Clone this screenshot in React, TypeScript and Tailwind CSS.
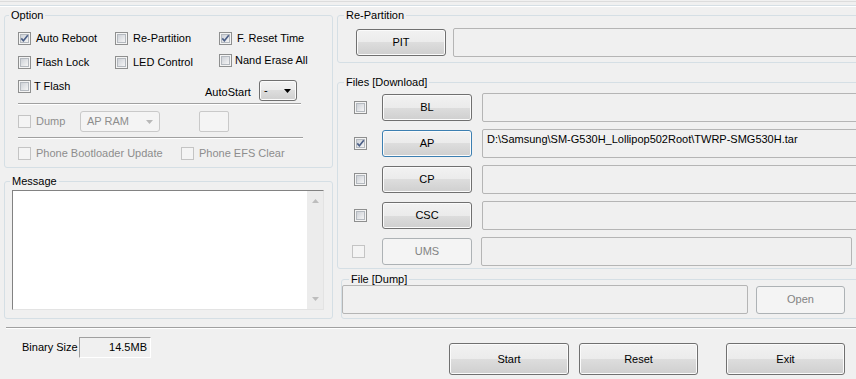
const btnBg =
  "bg-[linear-gradient(to_bottom,#f2f2f2_0%,#ebebeb_50%,#dddddd_50%,#cfcfcf_100%)] shadow-[inset_0_0_0_1px_#fbfbfb]";

function Check({ checked = false, disabled = false }: { checked?: boolean; disabled?: boolean }) {
  return (
    <svg width="13" height="13" viewBox="0 0 13 13" className="shrink-0">
      <defs>
        <linearGradient id="cbfill" x1="0" y1="0" x2="1" y2="1">
          <stop offset="0" stopColor="#cbcfd5" />
          <stop offset="1" stopColor="#f7f7f7" />
        </linearGradient>
      </defs>
      <rect x="0.5" y="0.5" width="12" height="12" fill={disabled ? "#f4f4f4" : "#f4f4f4"} stroke={disabled ? "#c4c4c4" : "#8e8f8f"} />
      {!disabled && <rect x="2.5" y="2.5" width="8" height="8" fill="url(#cbfill)" stroke="#b4b9bf" />}
      {checked && (
        <path d="M3.3 6.4 L5.4 8.8 L9.8 3.2" fill="none" stroke="#4a5e86" strokeWidth="1.6" />
      )}
    </svg>
  );
}

function Option({
  label,
  checked,
  disabled,
  gap = "ml-[5px]",
  className = "",
}: {
  label: string;
  checked?: boolean;
  disabled?: boolean;
  gap?: string;
  className?: string;
}) {
  return (
    <div className={`flex h-[13px] items-center ${className}`}>
      <Check checked={checked} disabled={disabled} />
      <span className={`${gap} whitespace-nowrap leading-[13px] ${disabled ? "text-[#8d8d8d]" : ""}`}>{label}</span>
    </div>
  );
}

function Button({
  label,
  className = "",
  disabled,
  focused,
}: {
  label: string;
  className?: string;
  disabled?: boolean;
  focused?: boolean;
}) {
  if (disabled)
    return (
      <div
        className={`flex shrink-0 items-center justify-center rounded-[3px] border border-[#adb2b5] bg-[#f4f4f4] text-[#838383] ${className}`}
      >
        {label}
      </div>
    );
  return (
    <div
      className={`flex shrink-0 items-center justify-center rounded-[3px] border ${
        focused ? "border-[#3c7fb1]" : "border-[#707070]"
      } ${btnBg} ${className}`}
    >
      {label}
    </div>
  );
}

function Field({ text, className = "" }: { text?: string; className?: string }) {
  return (
    <div
      className={`h-[29px] rounded-[2px] border border-[#b5b5b5] bg-[#f0f0f0] pl-[4px] pt-[3px] leading-[13px] ${className}`}
    >
      {text}
    </div>
  );
}

function Arrow({ color }: { color: string }) {
  return (
    <svg width="7" height="4" viewBox="0 0 7 4">
      <path d="M0 0 H7 L3.5 4 Z" fill={color} />
    </svg>
  );
}

function Separator({ className = "" }: { className?: string }) {
  return <div className={`h-[2px] border-t border-b border-t-[#a0a0a0] border-b-white ${className}`} />;
}

export default function App() {
  return (
    <div className="flex h-[379px] w-[856px] flex-col overflow-hidden bg-[#f0f0f0] font-['Liberation_Sans',Arial,sans-serif] text-[11px] text-black">
      <div className="h-[9px] shrink-0 pt-[1px]">
        <div className="h-[1px] bg-[#dcdcdc]" />
        <div className="mt-[3px] h-[1px] bg-[#d5dfe5]" />
        <div className="h-[1px] bg-white" />
      </div>

      <div className="flex h-[310px] shrink-0">
        {/* left column */}
        <div className="ml-[4px] flex w-[329px] shrink-0 flex-col">
          <fieldset className="h-[159px] rounded-[3px] border border-[#d5dfe5]">
            <legend className="ml-[4px] px-[2px] leading-[13px]">Option</legend>
            <div className="pl-[13px] pt-[10px]">
              <div className="flex h-[13px] items-center">
                <Option label="Auto Reboot" checked className="w-[97px]" />
                <Option label="Re-Partition" className="w-[104px]" />
                <Option label="F. Reset Time" checked />
              </div>
              <div className="mt-[11px] flex h-[13px] items-center">
                <Option label="Flash Lock" className="w-[97px]" />
                <Option label="LED Control" className="w-[104px]" />
                <Option label="Nand Erase All" gap="ml-[3px]" className="mb-[4px]" />
              </div>
              <div className="mt-[11px] flex h-[21px] items-start">
                <Option label="T Flash" gap="ml-[3px]" className="w-[187px]" />
                <span className="mt-[6px] w-[54px] leading-[13px]">AutoStart</span>
                <div
                  className={`flex h-[21px] w-[38px] items-center justify-between rounded-[3px] border border-[#707070] pl-[4px] pr-[5px] ${btnBg}`}
                >
                  <span>-</span>
                  <Arrow color="#000" />
                </div>
              </div>
              <Separator className="mt-[2px] w-[283px]" />
              <div className="mt-[6px] flex h-[21px] items-center">
                <Option label="Dump" disabled className="w-[62px]" />
                <div className="flex h-[21px] w-[80px] items-center justify-between rounded-[3px] border border-[#c9c9c9] bg-[#f4f4f4] pl-[6px] pr-[6px] text-[#8d8d8d]">
                  <span>AP RAM</span>
                  <Arrow color="#b8b8b8" />
                </div>
                <div className="ml-[39px] h-[21px] w-[30px] rounded-[2px] border border-[#c9c9c9] bg-[#f4f4f4]" />
              </div>
              <Separator className="mt-[5px] w-[285px]" />
              <div className="mt-[8px] flex h-[13px] items-center">
                <Option label="Phone Bootloader Update" disabled className="w-[163px]" />
                <Option label="Phone EFS Clear" disabled />
              </div>
            </div>
          </fieldset>

          <fieldset className="mt-[7px] h-[144px] rounded-[3px] border border-[#d5dfe5]">
            <legend className="ml-[5px] px-[2px] leading-[13px]">Message</legend>
            <div className="ml-[7px] mt-[2px] flex h-[120px] w-[312px] border border-t-[#828282] border-l-[#828282] border-r-[#e3e3e3] border-b-[#e3e3e3] bg-white">
              <div className="flex-1" />
              <div className="flex w-[16px] flex-col items-center justify-between bg-[#ececec] py-[8px]">
                <svg width="7" height="4" viewBox="0 0 7 4">
                  <path d="M0 4 H7 L3.5 0 Z" fill="#bdbdbd" />
                </svg>
                <Arrow color="#bdbdbd" />
              </div>
            </div>
          </fieldset>
        </div>

        {/* right column */}
        <div className="ml-[4px] flex w-[530px] shrink-0 flex-col">
          <fieldset className="h-[54px] rounded-[3px] border border-[#d5dfe5]">
            <legend className="ml-[6px] px-[2px] leading-[13px]">Re-Partition</legend>
            <div className="mt-[6px] flex h-[29px] items-center pl-[18px]">
              <Button label="PIT" className="h-[27px] w-[90px]" />
              <Field className="ml-[7px] flex-1" />
            </div>
          </fieldset>

          <fieldset className="mt-[13px] h-[193px] rounded-[3px] border border-[#d5dfe5]">
            <legend className="ml-[6px] px-[2px] leading-[13px]">Files [Download]</legend>
            <div className="mt-[4px] flex flex-col gap-[7px] pl-[16px]">
              {[
                { name: "BL" },
                { name: "AP", checked: true, focused: true, text: "D:\\Samsung\\SM-G530H_Lollipop502Root\\TWRP-SMG530H.tar" },
                { name: "CP" },
                { name: "CSC" },
              ].map((r) => (
                <div key={r.name} className="flex h-[29px] items-center">
                  <Check checked={r.checked} />
                  <Button label={r.name} focused={r.focused} className="ml-[15px] h-[27px] w-[90px]" />
                  <Field text={r.text} className="ml-[10px] flex-1" />
                </div>
              ))}
              <div className="flex h-[29px] items-center">
                <div className="-ml-[2px] mr-[2px]">
                  <Check disabled />
                </div>
                <Button label="UMS" disabled className="ml-[15px] h-[27px] w-[90px]" />
                <Field className="ml-[9px] mr-[14px] flex-1" />
              </div>
            </div>
          </fieldset>

          <fieldset className="ml-[4px] mt-[4px] h-[46px] rounded-[3px] border border-[#d5dfe5]">
            <legend className="ml-[7px] px-[2px] leading-[13px]">File [Dump]</legend>
            <div className="-mt-[1px] flex items-center">
              <Field className="w-[406px]" />
              <Button label="Open" disabled className="ml-[8px] h-[28px] w-[89px]" />
            </div>
          </fieldset>
        </div>
      </div>

      <Separator className="ml-[6px] mt-[8px] shrink-0" />

      <div className="flex items-start pl-[22px]">
        <span className="mt-[12px] w-[57px] leading-[13px]">Binary Size</span>
        <div className="mt-[8px] flex h-[21px] w-[72px] items-center justify-end border border-t-[#a0a0a0] border-l-[#a0a0a0] border-r-white border-b-white pr-[3px]">
          14.5MB
        </div>
        <Button label="Start" className="ml-[298px] mt-[14px] h-[32px] w-[120px]" />
        <Button label="Reset" className="ml-[10px] mt-[14px] h-[32px] w-[119px]" />
        <Button label="Exit" className="ml-[28px] mt-[14px] h-[32px] w-[119px]" />
      </div>
    </div>
  );
}
